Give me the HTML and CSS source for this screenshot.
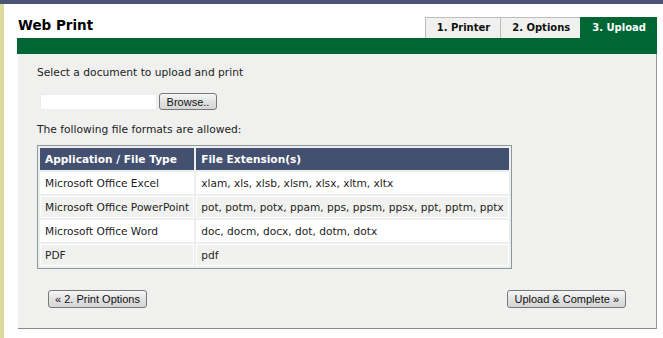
FILE: index.html
```html
<!DOCTYPE html>
<html>
<head>
<meta charset="utf-8">
<link rel="stylesheet" href="styles.css">
</head>
<body>
<div class="topbar"></div>
<div class="page">
  <div class="strip"></div>
  <div class="main">
    <div class="header">
      <h1 class="title">Web Print</h1>
      <ul class="tabs">
        <li class="tab">1. Printer</li>
        <li class="tab">2. Options</li>
        <li class="tab active">3. Upload</li>
      </ul>
    </div>
    <div class="greenbar"></div>
    <div class="panel">
      <p class="text">Select a document to upload and print</p>
      <div class="filerow">
        <span class="fileinput"></span>
        <button class="btn browse">Browse..</button>
      </div>
      <p class="text">The following file formats are allowed:</p>
      <table class="formats">
        <thead>
          <tr><th>Application / File Type</th><th>File Extension(s)</th></tr>
        </thead>
        <tbody>
          <tr><td>Microsoft Office Excel</td><td>xlam, xls, xlsb, xlsm, xlsx, xltm, xltx</td></tr>
          <tr><td>Microsoft Office PowerPoint</td><td>pot, potm, potx, ppam, pps, ppsm, ppsx, ppt, pptm, pptx</td></tr>
          <tr><td>Microsoft Office Word</td><td>doc, docm, docx, dot, dotm, dotx</td></tr>
          <tr><td>PDF</td><td>pdf</td></tr>
        </tbody>
      </table>
      <div class="actions">
        <button class="btn">« 2. Print Options</button>
        <button class="btn">Upload &amp; Complete »</button>
      </div>
    </div>
  </div>
</div>
</body>
</html>
```

FILE: styles.css
```css
* { box-sizing: border-box; }
html, body {
  margin: 0;
  padding: 0;
  background: #ffffff;
  font-family: "DejaVu Sans", Verdana, sans-serif;
  color: #222222;
}
.topbar {
  height: 4px;
  background: #4a5576;
}
.page {
  display: flex;
  height: 334px;
}
.strip {
  width: 4px;
  background: #dcdb9c;
  flex: none;
}
.main {
  flex: 1;
  padding: 0 6px 0 13px;
}
.header {
  display: flex;
  justify-content: space-between;
  align-items: flex-end;
  height: 34px;
}
.title {
  margin: 13px 0 0 1px;
  font-size: 13.5px;
  font-weight: bold;
  line-height: 16px;
  color: #000000;
  align-self: flex-start;
}
.tabs {
  display: flex;
  list-style: none;
  margin: 0;
  padding: 0;
}
.tab {
  height: 21px;
  line-height: 20px;
  padding: 0 10px 0 11px;
  font-size: 10px;
  font-weight: bold;
  color: #111111;
  background: #f0f1ef;
  border: 1px solid #bdbdbd;
  border-bottom: none;
  border-right: none;
}
.tab.active {
  background: #006633;
  color: #ffffff;
  border-color: #006633;
  padding: 0 11px 0 11px;
}
.greenbar {
  height: 16px;
  background: #006633;
}
.panel {
  margin-left: 1px;
  height: 275px;
  background: #f0f1ef;
  border-right: 1px solid #9a9a9a;
  border-bottom: 1px solid #8a8a8a;
  padding: 11px 19px 0 19px;
  font-size: 10.7px;
}
.text {
  margin: 0;
  line-height: 16px;
}
.filerow {
  display: flex;
  align-items: center;
  gap: 2px;
  margin: 12px 0 12px 3px;
  height: 17px;
}
.fileinput {
  display: block;
  width: 117px;
  height: 16px;
  background: #ffffff;
  border: 1px solid #ececec;
}
.btn {
  font-family: "Liberation Sans", Arial, sans-serif;
  font-size: 11px;
  color: #111111;
  height: 18px;
  padding: 0 6px;
  line-height: 16px;
  border: 1px solid #777777;
  border-radius: 3px;
  background: linear-gradient(#f6f6f6, #e2e2e2 50%, #d6d6d6);
  cursor: pointer;
}
.browse {
  width: 58px;
  height: 17px;
  padding: 0;
}
.formats {
  margin-top: 7px;
  border: 1px solid #8e96a2;
  border-spacing: 2px;
  background: #ecefec;
  white-space: nowrap;
}
.formats th,
.formats td {
  height: 22px;
  padding: 0 5px;
  text-align: left;
  font-size: 10.6px;
}
.formats th {
  background: #435070;
  color: #ffffff;
  font-weight: bold;
}
.formats tbody tr:nth-child(odd) td {
  background: #ffffff;
}
.formats tbody tr:nth-child(even) td {
  background: #f1f2f0;
  box-shadow: inset 0 0 0 1px #ffffff;
}
.actions {
  display: flex;
  justify-content: space-between;
  margin: 21px 11px 0 11px;
}
```
